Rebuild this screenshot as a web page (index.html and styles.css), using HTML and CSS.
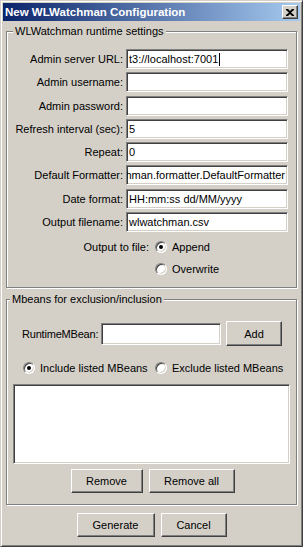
FILE: index.html
```html
<!DOCTYPE html>
<html lang="en">
  <head>
    <meta charset="UTF-8" />
    <title>New WLWatchman Configuration</title>
    <link rel="stylesheet" href="styles.css">
  </head>

  <body>
    <div class="window">
      <div class="titlebar">
        <span class="title">New WLWatchman Configuration</span>
        <span class="close-btn">
          <svg width="8" height="7" viewBox="0 0 8 7">
            <path d="M0 0h2l2 2 2-2h2v1L5 3.5 8 6v1H6L4 5 2 7H0V6l3-2.5L0 1z" fill="#000" />
          </svg>
        </span>
      </div>

      <div class="content">
        <fieldset class="group group-runtime">
          <legend>WLWatchman runtime settings</legend>
          <div class="form-grid">
            <label>Admin server URL:</label>
            <div class="field">t3://localhost:7001<span class="caret"></span></div>
            <label>Admin username:</label>
            <div class="field"></div>
            <label>Admin password:</label>
            <div class="field"></div>
            <label>Refresh interval (sec):</label>
            <div class="field">5</div>
            <label>Repeat:</label>
            <div class="field">0</div>
            <label>Default Formatter:</label>
            <div class="field field-scrolled"><span>hman.formatter.DefaultFormatter</span></div>
            <label>Date format:</label>
            <div class="field">HH:mm:ss dd/MM/yyyy</div>
            <label>Output filename:</label>
            <div class="field">wlwatchman.csv</div>
          </div>

          <div class="output-row">
            <span class="output-label">Output to file:</span>
            <div class="radio-list">
              <div class="radio-opt"><span class="radio checked"></span>Append</div>
              <div class="radio-opt"><span class="radio"></span>Overwrite</div>
            </div>
          </div>
        </fieldset>

        <fieldset class="group group-mbeans">
          <legend>Mbeans for exclusion/inclusion</legend>
          <div class="mbean-row">
            <span class="mbean-label">RuntimeMBean:</span>
            <div class="field mbean-field"></div>
            <span class="btn btn-add">Add</span>
          </div>
          <div class="mode-row">
            <div class="radio-opt"><span class="radio checked"></span>Include listed MBeans</div>
            <div class="radio-opt"><span class="radio"></span>Exclude listed MBeans</div>
          </div>
          <div class="listbox"></div>
          <div class="btn-row">
            <span class="btn btn-remove">Remove</span>
            <span class="btn btn-remove-all">Remove all</span>
          </div>
        </fieldset>

        <div class="btn-row footer">
          <span class="btn btn-generate">Generate</span>
          <span class="btn btn-cancel">Cancel</span>
        </div>
      </div>
    </div>
  </body>
</html>
```

FILE: styles.css
```css
body {
  margin: 0;
  background-color: #d4d0c8;
  font-family: "Liberation Sans", Arial, sans-serif;
  font-size: 11px;
  color: #000;
}

.window {
  width: 303px;
  height: 547px;
  box-sizing: border-box;
  padding: 2px;
  border: 1px solid;
  border-color: #d4d0c8 #404040 #404040 #d4d0c8;
  box-shadow: inset 1px 1px #fff, inset -1px -1px #808080;
  background-color: #d4d0c8;
}

/* title bar */
.titlebar {
  height: 18px;
  display: flex;
  align-items: center;
  justify-content: space-between;
  padding: 0 2px 0 2px;
  background: linear-gradient(to right, #0a246a, #a6caf0);
}

.title {
  color: #fff;
  font-weight: bold;
  font-size: 11.5px;
  white-space: nowrap;
}

.close-btn {
  width: 16px;
  height: 14px;
  box-sizing: border-box;
  display: flex;
  align-items: center;
  justify-content: center;
  background-color: #d4d0c8;
  border: 1px solid;
  border-color: #fff #404040 #404040 #fff;
  box-shadow: inset -1px -1px #808080;
}

.content {
  padding: 0 3px;
}

/* group boxes */
.group {
  margin: 3px 0 0 0;
  padding: 11px 8px 10px 0;
  border: 1px solid #808080;
  box-shadow: inset 1px 1px #fff, 1px 1px #fff;
}

.group legend {
  margin-left: 6px;
  padding: 0 2px;
  line-height: 14px;
  background-color: #d4d0c8;
}

.group-mbeans {
  margin-top: 4px;
  padding: 15px 6px 11px 0;
}

.group-mbeans legend {
  margin-left: 3px;
}

.form-grid {
  display: grid;
  grid-template-columns: 116px 162px;
  column-gap: 3px;
  row-gap: 3.3px;
  align-items: center;
}

.form-grid label {
  text-align: right;
  white-space: nowrap;
}

.field {
  height: 20px;
  box-sizing: border-box;
  display: flex;
  align-items: center;
  padding: 0 2px;
  overflow: hidden;
  white-space: nowrap;
  background-color: #fff;
  border: 1px solid;
  border-color: #808080 #fff #fff #808080;
  box-shadow: inset 1px 1px #404040, inset -1px -1px #d4d0c8;
}

.field-scrolled {
  justify-content: flex-end;
}

.caret {
  display: inline-block;
  width: 1px;
  height: 13px;
  margin-left: 1px;
  background-color: #000;
}

/* radio buttons */
.output-row {
  display: grid;
  grid-template-columns: 142px auto;
  column-gap: 6px;
  margin-top: 7px;
}

.output-label {
  text-align: right;
  line-height: 16px;
}

.radio-list {
  display: flex;
  flex-direction: column;
  gap: 6px;
}

.radio-opt {
  display: flex;
  align-items: center;
  gap: 5px;
  height: 16px;
  white-space: nowrap;
}

.radio {
  width: 12px;
  height: 12px;
  box-sizing: border-box;
  flex-shrink: 0;
  display: flex;
  align-items: center;
  justify-content: center;
  border-radius: 50%;
  border: 1px solid;
  border-color: #808080 #fff #fff #808080;
  box-shadow: inset 1px 1px #404040, inset -1px -1px #d4d0c8;
  background-color: #fff;
}

.radio.checked::after {
  content: "";
  width: 4px;
  height: 4px;
  border-radius: 50%;
  background-color: #000;
}

/* mbeans group */
.mbean-row {
  display: flex;
  align-items: center;
  padding-left: 15px;
}

.mbean-label {
  width: 79px;
  flex: none;
  letter-spacing: -0.2px;
}

.mbean-field {
  width: 120px;
  height: 22px;
  flex: none;
}

.btn {
  height: 24px;
  box-sizing: border-box;
  display: inline-flex;
  align-items: center;
  justify-content: center;
  background-color: #d4d0c8;
  border: 1px solid;
  border-color: #fff #404040 #404040 #fff;
  box-shadow: inset -1px -1px #808080;
  white-space: nowrap;
}

.btn-add {
  width: 56px;
  height: 25px;
  margin-left: 5px;
  flex: none;
}

.mode-row {
  display: grid;
  grid-template-columns: 132px auto;
  margin-top: 14px;
  padding-left: 16px;
}

.listbox {
  height: 80px;
  margin: 8px 0 0 6px;
  box-sizing: border-box;
  background-color: #fff;
  border: 1px solid;
  border-color: #808080 #fff #fff #808080;
  box-shadow: inset 1px 1px #404040, inset -1px -1px #d4d0c8;
}

.btn-row {
  display: flex;
  justify-content: center;
  gap: 6px;
  margin-top: 5px;
}

.group .btn-row {
  padding-left: 8px;
}

.btn-remove {
  width: 72px;
}

.btn-remove-all {
  width: 86px;
}

.footer {
  margin-top: 8px;
}

.btn-generate {
  width: 78px;
}

.btn-cancel {
  width: 66px;
}
```
